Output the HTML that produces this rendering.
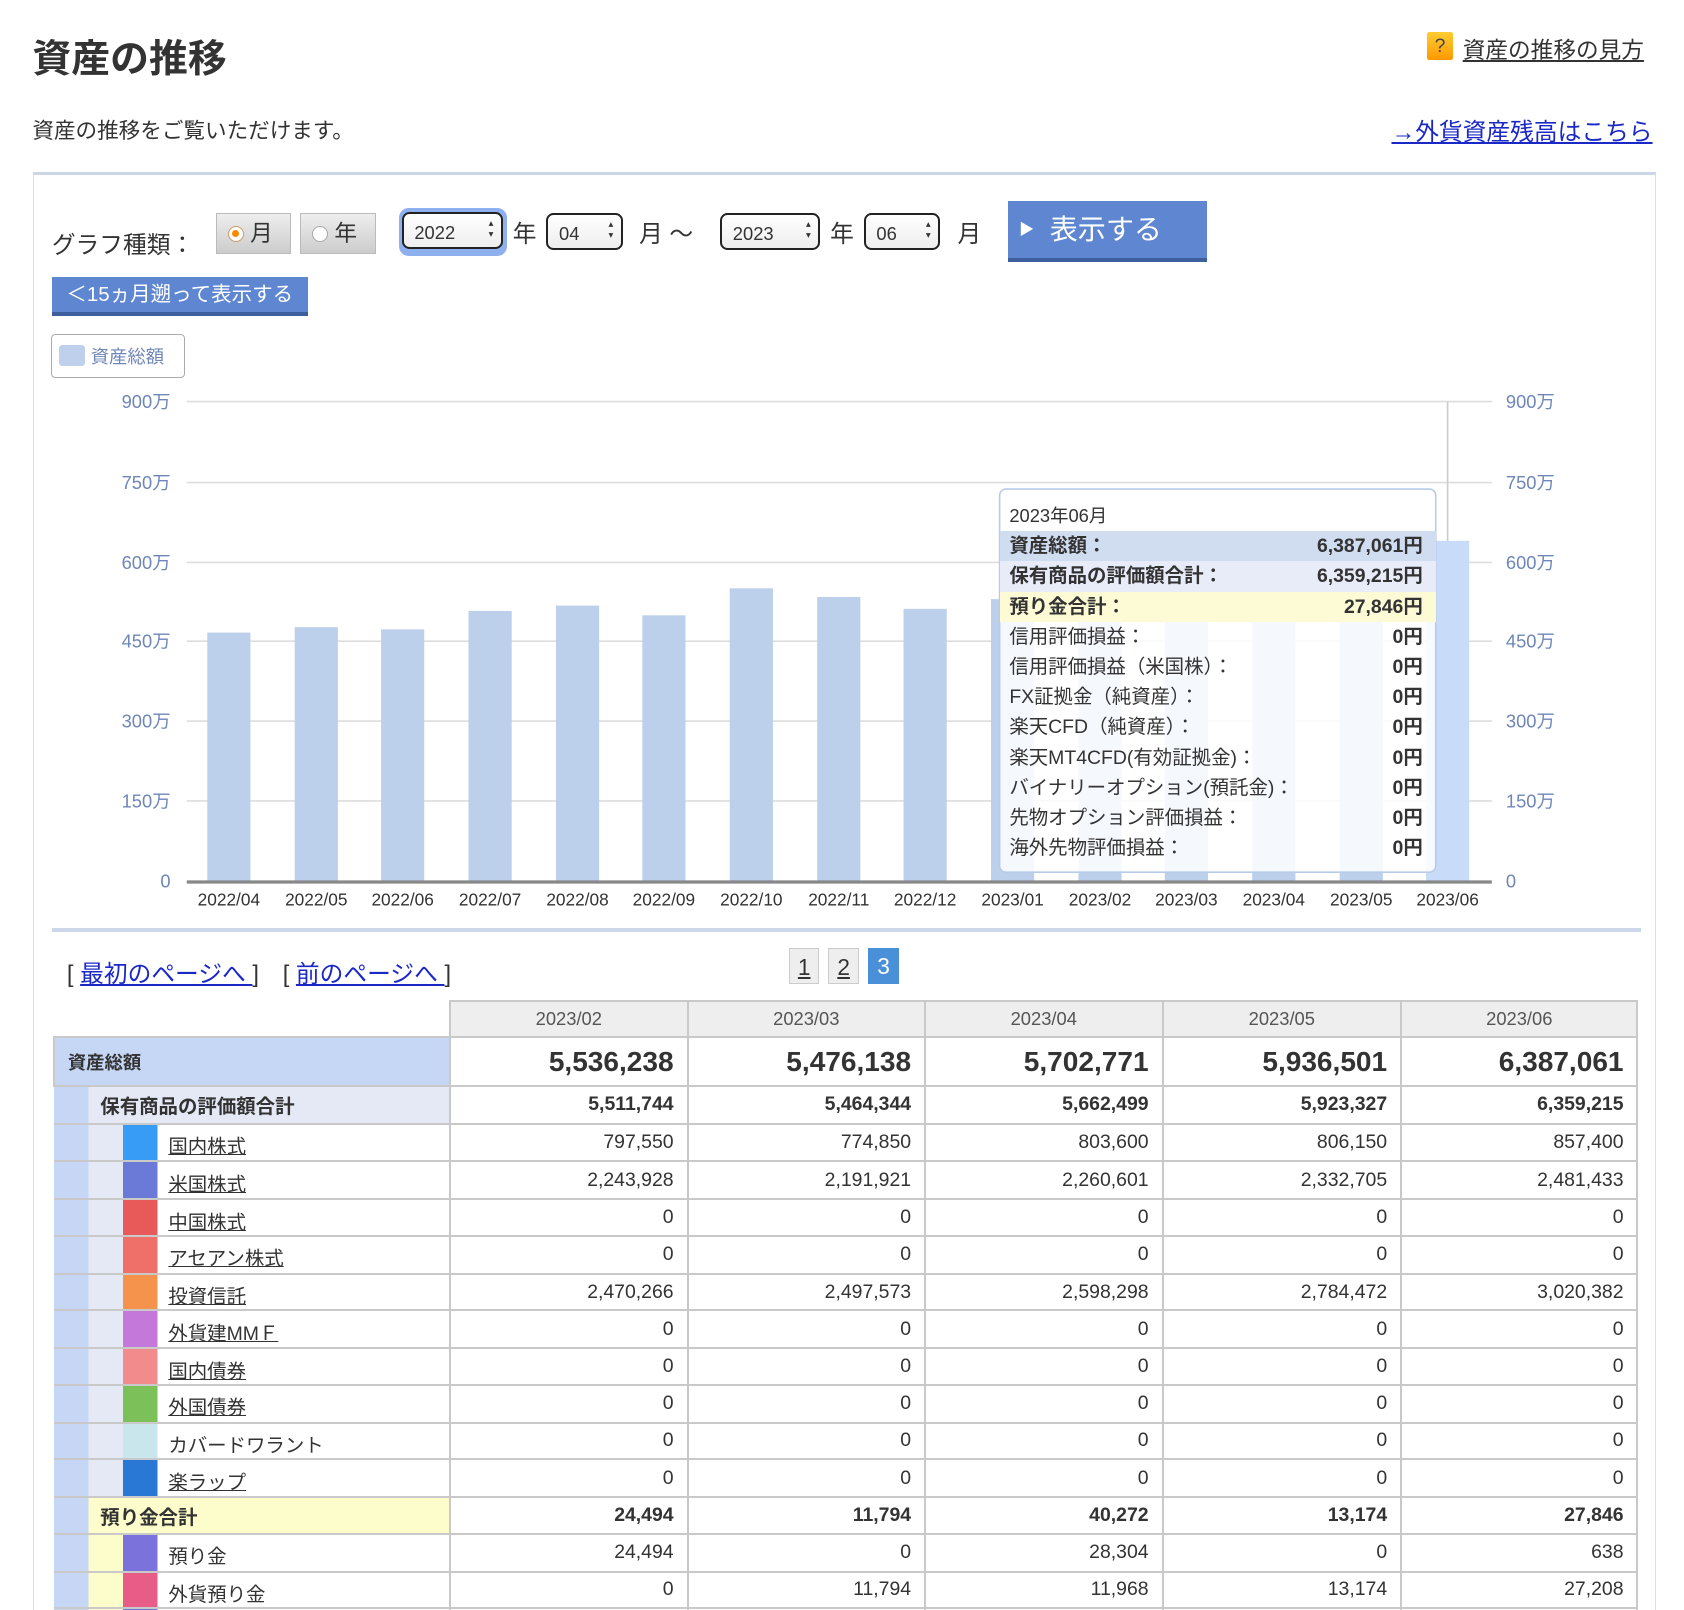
<!DOCTYPE html>
<html><head><meta charset="utf-8">
<style>
html,body{margin:0;padding:0;background:#fff;overflow:hidden}
body{width:1684px;height:1610px}
#w{zoom:1.0795;position:relative;width:1560px;height:1492px;font-family:"Liberation Sans","Noto Sans CJK JP",sans-serif;color:#333}
.a{position:absolute;white-space:nowrap}
.sel{position:absolute;top:197px;height:35px;border:2px solid #222;border-radius:7px;background:linear-gradient(#fff,#eee);font-size:17px;line-height:35px;padding-left:10px;box-sizing:border-box}
.sel:after{content:"▴\A▾";white-space:pre;position:absolute;right:7px;top:5px;font-size:9px;line-height:10px}
.rad{position:absolute;top:197px;height:38px;width:70px;background:linear-gradient(#eee,#ccc);border:1px solid #bbb;box-sizing:border-box;font-size:21px;line-height:36px}
.rad i{display:inline-block;width:13px;height:13px;border:1px solid #aaa;border-radius:50%;background:#fff;margin:0 6px 0 10px;vertical-align:-1px;position:relative}
.btn{position:absolute;background:#5f86d1;color:#fff;border-bottom:4px solid #3d5f9e;box-sizing:border-box}
.tt{position:absolute;left:926px;width:404px;font-size:18px}
.tr{position:absolute;left:0;width:404px;height:28px;line-height:28px}
.tr b,.tr span{position:absolute}
.tr .l{left:9px}.tr .v{right:12px;font-weight:bold}
table{position:absolute;left:49px;top:926px;border-collapse:collapse;table-layout:fixed}
td{border:2px solid #c9c9c9;height:31px;padding:0 12px;font-size:18px;text-align:right;box-sizing:border-box}
td.h{background:#eee;text-align:center;color:#555;font-size:17px;height:34px}
td.l{text-align:left;border-left:none;padding-left:0;position:relative}
td.l u,td.l span{position:absolute;left:106px;top:5px}
</style></head><body><div id="w">
<div class="a" style="left:30px;top:26px;font-size:36px;font-weight:bold;color:#333">資産の推移</div>
<div class="a" style="left:1322px;top:30px;width:24px;height:26px;background:linear-gradient(#fc3,#f90);border-radius:2px;color:#444;text-align:center;font-size:18px;line-height:26px">?</div>
<div class="a" style="left:1355px;top:30px;font-size:21px;text-decoration:underline">資産の推移の見方</div>
<div class="a" style="left:30px;top:106px;font-size:20px">資産の推移をご覧いただけます。</div>
<div class="a" style="left:1289px;top:104px;font-size:22px;color:#1a28c6;text-decoration:underline">→外貨資産残高はこちら</div>
<div class="a" style="left:31px;top:159px;width:1501px;height:1340px;border:1px solid #d6deea;border-top:3px solid #ccd6e6;border-bottom:none"></div>
<div class="a" style="left:48px;top:208px;font-size:22px">グラフ種類：</div>
<div class="rad" style="left:200px"><i style="border-color:#c96"><b style="position:absolute;left:3px;top:3px;width:7px;height:7px;border-radius:50%;background:#f80"></b></i>月</div>
<div class="rad" style="left:278px"><i></i>年</div>
<div class="a" style="left:370px;top:193px;width:100px;height:44px;border-radius:9px;background:#8fb0ef"></div>
<div class="sel" style="left:372px;width:94px;top:196px">2022</div>
<div class="a" style="left:475px;top:198px;font-size:22px">年</div>
<div class="sel" style="left:506px;width:71px">04</div>
<div class="a" style="left:592px;top:198px;font-size:22px">月 〜</div>
<div class="sel" style="left:667px;width:93px">2023</div>
<div class="a" style="left:769px;top:198px;font-size:22px">年</div>
<div class="sel" style="left:800px;width:71px">06</div>
<div class="a" style="left:887px;top:198px;font-size:22px">月</div>
<div class="btn" style="left:934px;top:186px;width:184px;height:57px;font-size:26px;line-height:54px;padding-left:10px"><span style="font-size:14px;vertical-align:4px">▶</span>&nbsp; 表示する</div>
<div class="btn" style="left:48px;top:257px;width:237px;height:36px;font-size:19px;line-height:33px;text-align:center">＜15ヵ月遡って表示する</div>
<div class="a" style="left:47px;top:309px;width:124px;height:41px;border:1px solid #aaa;border-radius:4px;box-sizing:border-box"></div>
<div class="a" style="left:55px;top:320px;width:24px;height:19px;background:#bfd0ec;border-radius:3px"></div>
<div class="a" style="left:84px;top:318px;font-size:17px;color:#6f86b8">資産総額</div>
<svg class="a" style="left:0;top:0" width="1560" height="870" font-family="Liberation Sans, Noto Sans CJK JP, sans-serif">
<g stroke="#ddd" stroke-width="1.5">
<line x1="173" x2="1382" y1="372" y2="372"/><line x1="173" x2="1382" y1="447" y2="447"/><line x1="173" x2="1382" y1="521" y2="521"/><line x1="173" x2="1382" y1="594" y2="594"/><line x1="173" x2="1382" y1="668" y2="668"/><line x1="173" x2="1382" y1="742" y2="742"/></g>
<g fill="#6f86b8" font-size="17" text-anchor="end">
<text x="158" y="378">900万</text><text x="158" y="453">750万</text><text x="158" y="527">600万</text><text x="158" y="600">450万</text><text x="158" y="674">300万</text><text x="158" y="748">150万</text><text x="158" y="822">0</text></g>
<g fill="#6f86b8" font-size="17">
<text x="1395" y="378">900万</text><text x="1395" y="453">750万</text><text x="1395" y="527">600万</text><text x="1395" y="600">450万</text><text x="1395" y="674">300万</text><text x="1395" y="748">150万</text><text x="1395" y="822">0</text></g>
<line x1="1341" x2="1341" y1="372" y2="816" stroke="#ccc" stroke-width="1.5"/>
<g fill="#bccfeb">
<rect x="192" y="586" width="40" height="230"/><rect x="273" y="581" width="40" height="235"/><rect x="353" y="583" width="40" height="233"/><rect x="434" y="566" width="40" height="250"/><rect x="515" y="561" width="40" height="255"/><rect x="595" y="570" width="40" height="246"/><rect x="676" y="545" width="40" height="271"/><rect x="757" y="553" width="40" height="263"/><rect x="837" y="564" width="40" height="252"/><rect x="918" y="555" width="40" height="261"/><rect x="999" y="543" width="40" height="273"/><rect x="1079" y="546" width="40" height="270"/><rect x="1160" y="535" width="40" height="281"/><rect x="1241" y="523" width="40" height="293"/></g>
<rect x="1321" y="501" width="40" height="315" fill="#c8dbf8"/>
<line x1="173" x2="1382" y1="817" y2="817" stroke="#888" stroke-width="3"/>
<g fill="#333" font-size="16" text-anchor="middle">
<text x="212" y="839">2022/04</text><text x="293" y="839">2022/05</text><text x="373" y="839">2022/06</text><text x="454" y="839">2022/07</text><text x="535" y="839">2022/08</text><text x="615" y="839">2022/09</text><text x="696" y="839">2022/10</text><text x="777" y="839">2022/11</text><text x="857" y="839">2022/12</text><text x="938" y="839">2023/01</text><text x="1019" y="839">2023/02</text><text x="1099" y="839">2023/03</text><text x="1180" y="839">2023/04</text><text x="1261" y="839">2023/05</text><text x="1341" y="839">2023/06</text></g>
<rect x="926" y="453" width="404" height="355" rx="6" fill="#fff" fill-opacity="0.85" stroke="#b8cbe8" stroke-width="1.5"/>
</svg>
<div class="tt" style="top:453px;height:355px">
<div class="tr" style="top:11px"><span class="l" style="font-size:17px">2023年06月</span></div>
<div class="tr" style="top:39px;background:#d0dcef"><b class="l">資産総額：</b><span class="v">6,387,061円</span></div>
<div class="tr" style="top:67px;background:#e8ebf8"><b class="l">保有商品の評価額合計：</b><span class="v">6,359,215円</span></div>
<div class="tr" style="top:95px;background:#fdfbd5"><b class="l">預り金合計：</b><span class="v">27,846円</span></div>
<div class="tr" style="top:123px"><span class="l">信用評価損益：</span><span class="v">0円</span></div>
<div class="tr" style="top:151px"><span class="l">信用評価損益（米国株）：</span><span class="v">0円</span></div>
<div class="tr" style="top:179px"><span class="l">FX証拠金（純資産）：</span><span class="v">0円</span></div>
<div class="tr" style="top:207px"><span class="l">楽天CFD（純資産）：</span><span class="v">0円</span></div>
<div class="tr" style="top:235px"><span class="l">楽天MT4CFD(有効証拠金)：</span><span class="v">0円</span></div>
<div class="tr" style="top:263px"><span class="l">バイナリーオプション(預託金)：</span><span class="v">0円</span></div>
<div class="tr" style="top:291px"><span class="l">先物オプション評価損益：</span><span class="v">0円</span></div>
<div class="tr" style="top:319px"><span class="l">海外先物評価損益：</span><span class="v">0円</span></div>
</div>
<div class="a" style="left:48px;top:860px;width:1472px;height:3px;background:#ccd8ea"></div>
<div class="a" style="left:62px;top:884px;font-size:22px">[ <u style="color:#1a28c6">最初のページへ </u>]　[ <u style="color:#1a28c6">前のページへ </u>]</div>
<div class="a" style="left:731px;top:878px;width:28px;height:34px;border:1px solid #ccc;background:#eee;text-align:center;font-size:21px;line-height:34px;box-sizing:border-box"><u>1</u></div>
<div class="a" style="left:767px;top:878px;width:29px;height:34px;border:1px solid #ccc;background:#eee;text-align:center;font-size:21px;line-height:34px;box-sizing:border-box"><u>2</u></div>
<div class="a" style="left:804px;top:878px;width:29px;height:34px;background:#4a90d9;color:#fff;text-align:center;font-size:21px;line-height:34px">3</div>
<table>
<colgroup><col style="width:367px"><col style="width:220px"><col style="width:220px"><col style="width:220px"><col style="width:221px"><col style="width:219px"></colgroup>
<tr><td style="border:none;border-right:2px solid #c9c9c9"></td><td class="h">2023/02</td><td class="h">2023/03</td><td class="h">2023/04</td><td class="h">2023/05</td><td class="h">2023/06</td></tr>
<tr style="height:45px"><td style="text-align:left;background:#c5d7f5;font-weight:bold;font-size:17px">資産総額</td><td style="font-size:26px;font-weight:bold">5,536,238</td><td style="font-size:26px;font-weight:bold">5,476,138</td><td style="font-size:26px;font-weight:bold">5,702,771</td><td style="font-size:26px;font-weight:bold">5,936,501</td><td style="font-size:26px;font-weight:bold">6,387,061</td></tr>
<tr style="height:35px;font-weight:bold"><td style="text-align:left;background:linear-gradient(90deg,#c5d7f5 32px,#e5e9f6 32px);padding-left:43px;font-size:18px;border-left:none">保有商品の評価額合計</td><td>5,511,744</td><td>5,464,344</td><td>5,662,499</td><td>5,923,327</td><td>6,359,215</td></tr>
<tr style="height:35px"><td class="l" style="background:linear-gradient(90deg,#c5d7f5 32px,#e5e9f6 32px 64px,#379cf5 64px 96px,#fff 96px)"><u>国内株式</u></td><td>797,550</td><td>774,850</td><td>803,600</td><td>806,150</td><td>857,400</td></tr>
<tr style="height:35px"><td class="l" style="background:linear-gradient(90deg,#c5d7f5 32px,#e5e9f6 32px 64px,#6a7ad6 64px 96px,#fff 96px)"><u>米国株式</u></td><td>2,243,928</td><td>2,191,921</td><td>2,260,601</td><td>2,332,705</td><td>2,481,433</td></tr>
<tr style="height:34px"><td class="l" style="background:linear-gradient(90deg,#c5d7f5 32px,#e5e9f6 32px 64px,#e85a5a 64px 96px,#fff 96px)"><u>中国株式</u></td><td>0</td><td>0</td><td>0</td><td>0</td><td>0</td></tr>
<tr style="height:35px"><td class="l" style="background:linear-gradient(90deg,#c5d7f5 32px,#e5e9f6 32px 64px,#ef7068 64px 96px,#fff 96px)"><u>アセアン株式</u></td><td>0</td><td>0</td><td>0</td><td>0</td><td>0</td></tr>
<tr style="height:34px"><td class="l" style="background:linear-gradient(90deg,#c5d7f5 32px,#e5e9f6 32px 64px,#f5934d 64px 96px,#fff 96px)"><u>投資信託</u></td><td>2,470,266</td><td>2,497,573</td><td>2,598,298</td><td>2,784,472</td><td>3,020,382</td></tr>
<tr style="height:35px"><td class="l" style="background:linear-gradient(90deg,#c5d7f5 32px,#e5e9f6 32px 64px,#c478da 64px 96px,#fff 96px)"><u>外貨建MMＦ</u></td><td>0</td><td>0</td><td>0</td><td>0</td><td>0</td></tr>
<tr style="height:34px"><td class="l" style="background:linear-gradient(90deg,#c5d7f5 32px,#e5e9f6 32px 64px,#f28c8c 64px 96px,#fff 96px)"><u>国内債券</u></td><td>0</td><td>0</td><td>0</td><td>0</td><td>0</td></tr>
<tr style="height:35px"><td class="l" style="background:linear-gradient(90deg,#c5d7f5 32px,#e5e9f6 32px 64px,#7cc05a 64px 96px,#fff 96px)"><u>外国債券</u></td><td>0</td><td>0</td><td>0</td><td>0</td><td>0</td></tr>
<tr style="height:34px"><td class="l" style="background:linear-gradient(90deg,#c5d7f5 32px,#e5e9f6 32px 64px,#c8e6ec 64px 96px,#fff 96px)"><span>カバードワラント</span></td><td>0</td><td>0</td><td>0</td><td>0</td><td>0</td></tr>
<tr style="height:35px"><td class="l" style="background:linear-gradient(90deg,#c5d7f5 32px,#e5e9f6 32px 64px,#2a78d6 64px 96px,#fff 96px)"><u>楽ラップ</u></td><td>0</td><td>0</td><td>0</td><td>0</td><td>0</td></tr>
<tr style="height:34px;font-weight:bold"><td style="text-align:left;background:linear-gradient(90deg,#c5d7f5 32px,#fdfccb 32px);padding-left:43px;border-left:none">預り金合計</td><td>24,494</td><td>11,794</td><td>40,272</td><td>13,174</td><td>27,846</td></tr>
<tr style="height:35px"><td class="l" style="background:linear-gradient(90deg,#c5d7f5 32px,#fdfccb 32px 64px,#7b72dc 64px 96px,#fff 96px)"><span>預り金</span></td><td>24,494</td><td>0</td><td>28,304</td><td>0</td><td>638</td></tr>
<tr style="height:34px"><td class="l" style="background:linear-gradient(90deg,#c5d7f5 32px,#fdfccb 32px 64px,#e85c88 64px 96px,#fff 96px)"><span>外貨預り金</span></td><td>0</td><td>11,794</td><td>11,968</td><td>13,174</td><td>27,208</td></tr>
<tr style="height:34px"><td class="l" style="background:linear-gradient(90deg,#c5d7f5 32px,#fdfccb 32px 64px,#6a7ad6 64px 96px,#fff 96px)"></td><td></td><td></td><td></td><td></td><td></td></tr>
</table>
</div></body></html>
